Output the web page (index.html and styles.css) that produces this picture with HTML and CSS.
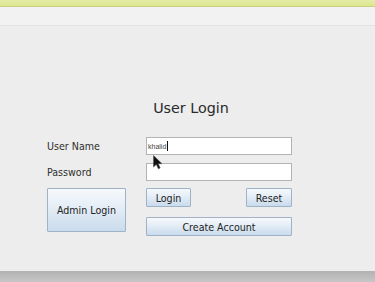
FILE: index.html
```html
<!DOCTYPE html>
<html lang="en">
<head>
  <meta charset="UTF-8" />
  <meta name="viewport" content="width=device-width, initial-scale=1" />
  <title>User Login</title>
  <link rel="stylesheet" href="styles.css">
</head>
<body>
  <div class="window">
    <div class="titlebar"></div>
    <div class="toolbar"></div>

    <main class="content">
      <h1 class="title">User Login</h1>

      <form class="login-form">
        <label class="label" for="username">User Name</label>
        <div class="field">
          <span class="field-text">khalid</span><span class="caret"></span>
        </div>

        <label class="label" for="password">Password</label>
        <div class="field"></div>

        <button type="button" class="btn admin">Admin Login</button>
        <div class="btn-row">
          <button type="button" class="btn small">Login</button>
          <button type="button" class="btn small">Reset</button>
        </div>
        <button type="button" class="btn wide">Create Account</button>
      </form>

      <!-- mouse pointer sitting over the first field -->
      <svg class="pointer" width="11" height="15" viewBox="0 0 11 15">
        <path d="M0.5 0.5 L0.5 12 L3.3 9.4 L5.4 13.8 L7.2 13 L5.2 8.7 L9 8.7 Z" fill="#111" stroke="#555" stroke-width="0.6" />
      </svg>
    </main>

    <div class="statusbar"></div>
  </div>
</body>
</html>
```

FILE: styles.css
```css
html, body {
  margin: 0;
  padding: 0;
  width: 375px;
  height: 282px;
  overflow: hidden;
  background: #ededed;
  font-family: "DejaVu Sans", sans-serif;
  color: #2b2b2b;
}
.window {
  display: flex;
  flex-direction: column;
  height: 282px;
}
.titlebar {
  height: 6px;
  background: linear-gradient(#e4eda6, #dbe68e);
  border-bottom: 1px solid #c9d27e;
}
.toolbar {
  height: 18px;
  background: #f2f2f2;
  border-bottom: 1px solid #e3e3e3;
}
.content {
  position: relative;
  flex: 1;
  padding-top: 74px;
  background: #ededed;
}
.title {
  margin: 0;
  padding-left: 7px;
  text-align: center;
  font-size: 14.3px;
  line-height: 17px;
  font-weight: normal;
  color: #2a2a2a;
}
.login-form {
  display: grid;
  grid-template-columns: 99px 146px;
  grid-template-rows: 18px 18px 19px 19px;
  row-gap: 8px;
  margin: 20px 0 0 47px;
}
.label,
.btn {
  font-family: "DejaVu Sans Condensed", "DejaVu Sans", sans-serif;
  font-stretch: condensed;
  font-size: 10.6px;
}
.label {
  align-self: center;
  color: #2e2e2e;
}
.field {
  display: flex;
  align-items: center;
  box-sizing: border-box;
  height: 18px;
  padding-left: 1px;
  background: #fff;
  border: 1px solid #b3b3b3;
}
.field-text {
  font-family: "Liberation Sans", sans-serif;
  font-size: 7px;
  color: #444;
}
.caret {
  width: 1px;
  height: 10px;
  margin-left: 1px;
  background: #111;
}
.btn {
  box-sizing: border-box;
  margin: 0;
  padding: 0;
  color: #232323;
  background: linear-gradient(#f6f9fc, #e4edf6 45%, #c9dbec);
  border: 1px solid #9fb3c8;
  border-radius: 1px;
}
.admin {
  grid-row: 3 / span 2;
  align-self: start;
  height: 44px;
  width: 79px;
  margin-top: -1px;
}
.btn-row {
  display: flex;
  justify-content: space-between;
  margin-top: -1px;
}
.small {
  width: 45px;
  height: 19px;
}
.small:last-child {
  width: 46px;
}
.wide {
  grid-column: 2;
  height: 19px;
  margin-top: 1px;
}
.pointer {
  position: absolute;
  left: 153px;
  top: 129px;
}
.statusbar {
  height: 11px;
  background: linear-gradient(#b2b2b2, #c6c6c6);
}
```
